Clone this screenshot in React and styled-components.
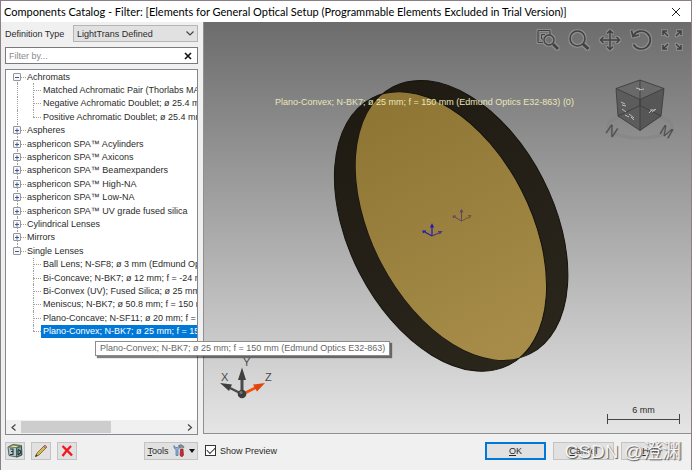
import React from 'react';
import styled, { createGlobalStyle, css } from 'styled-components';

const COLOR = {
  FACE: '#f0f0f0',
  TEXT: '#2b2b2b',
  BORDER: '#7a7a7a',
  BUTTON: '#e1e1e1',
  BUTTON_BORDER: '#c3c3c3',
  SELECTED: '#0078d7',
  LABEL: '#e9e6b9',
};

const FONT_SIZE = {
  NORMAL: '9px',
  TITLE: '11px',
  WATERMARK: '19px',
};

const GlobalStyle = createGlobalStyle`
  * {
    box-sizing: border-box;
  }

  body {
    margin: 0;
    background-color: #ffffff;
    color: ${COLOR.TEXT};
    font-family: 'Liberation Sans', Arial, sans-serif;
    font-size: ${FONT_SIZE.NORMAL};
  }

  button, input, select {
    font: inherit;
    color: inherit;
    margin: 0;
  }
`;

const Window = styled.main`
  position: relative;
  display: flex;
  flex-direction: column;
  height: calc(100vh - 1px);
  border: solid #8a7f84;
  border-width: 1px 1px 0;
  background-color: ${COLOR.FACE};
  overflow: hidden;
`;

const TitleBar = styled.header`
  display: flex;
  justify-content: space-between;
  align-items: center;
  height: 21px;
  padding: 0 10px 0 3px;
  background-color: #ffffff;
  color: #000000;

  h1 {
    margin: 0;
    font-family: Lato, 'Open Sans', sans-serif;
    font-size: ${FONT_SIZE.TITLE};
    font-weight: 400;
    white-space: nowrap;
  }
`;

const IconButton = styled.button`
  display: flex;
  justify-content: center;
  align-items: center;
  padding: 0;
  border: none;
  background: none;
`;

const Body = styled.div`
  flex: 1;
  min-height: 0;
  display: grid;
  grid-template-columns: 193px 1fr;
  column-gap: 5px;
  padding-left: 4px;
`;

const Sidebar = styled.section`
  min-width: 0;
  min-height: 0;
  display: flex;
  flex-direction: column;
  gap: 5px;
  padding-top: 3px;
`;

const Field = styled.div`
  display: flex;
  justify-content: space-between;
  align-items: center;
`;

const SelectBox = styled.div`
  position: relative;
  width: 125px;

  select {
    display: block;
    width: 100%;
    height: 17px;
    padding: 0 3px;
    appearance: none;
    border: 1px solid #b5b5b5;
    border-radius: 0;
    background-color: ${COLOR.BUTTON};
  }

  svg {
    position: absolute;
    top: 6px;
    right: 4px;
    pointer-events: none;
  }
`;

const FilterBox = styled.div`
  display: flex;
  align-items: center;
  height: 17px;
  padding: 0 5px 0 3px;
  border: 1px solid ${COLOR.BORDER};
  background-color: #ffffff;

  input {
    flex: 1;
    min-width: 0;
    padding: 0;
    border: none;
    outline: none;
  }

  input::placeholder {
    color: #8a8a8a;
  }
`;

const TreePane = styled.div`
  flex: 1;
  min-height: 0;
  display: flex;
  flex-direction: column;
  justify-content: space-between;
  border: 1px solid #828790;
  background-color: #ffffff;
`;

const TreeList = styled.ul`
  display: grid;
  grid-auto-rows: 1fr;
  min-height: 268px;
  margin: 0;
  padding: 0 0 0 7px;
  list-style: none;
  overflow: hidden;
`;

const connector = css`
  &::before {
    content: '';
    position: absolute;
    left: ${({ $level }) => ($level ? '20px' : '4px')};
    top: ${({ $first }) => ($first ? '50%' : '0')};
    bottom: ${({ $last }) => ($last ? '50%' : '0')};
    border-left: 1px dotted #a0a0a0;
  }

  &::after {
    content: '';
    position: absolute;
    left: ${({ $level }) => ($level ? '20px' : '8px')};
    top: 50%;
    width: ${({ $level }) => ($level ? '8px' : '5px')};
    border-top: 1px dotted #a0a0a0;
  }
`;

const TreeItem = styled.li`
  position: relative;
  display: flex;
  align-items: stretch;
  min-width: 0;
  padding-left: ${({ $level }) => ($level ? '28px' : '0')};
  ${connector}
`;

const Trunk = styled.i`
  position: absolute;
  left: 4px;
  top: 0;
  bottom: 0;
  border-left: 1px dotted #a0a0a0;
`;

const Expander = styled.button`
  position: relative;
  z-index: 1;
  align-self: center;
  flex: none;
  display: flex;
  width: 8px;
  height: 8px;
  margin-right: 4px;
  padding: 0;
  border: 1px solid #969696;
  border-radius: 1px;
  background-color: #f6f6f6;
`;

const ItemText = styled.span`
  display: flex;
  align-items: center;
  flex: ${({ $selected }) => ($selected ? '1' : 'none')};
  padding-left: 2px;
  line-height: 12px;
  white-space: nowrap;
  color: ${({ $selected }) => ($selected ? '#ffffff' : COLOR.TEXT)};
  background-color: ${({ $selected }) =>
    $selected ? COLOR.SELECTED : 'transparent'};
`;

const ScrollBar = styled.div`
  display: flex;
  align-items: center;
  height: 14px;
  background-color: ${COLOR.FACE};

  .track {
    flex: 1;
    height: 100%;
  }

  .thumb {
    width: 56%;
    height: 12px;
    margin-top: 1px;
    background-color: #cdcdcd;
  }

  button {
    width: 15px;
  }
`;

const ToolRow = styled.div`
  display: flex;
  align-items: center;
  gap: 6px;
  height: 35px;
  margin-top: -5px;
  padding-bottom: 4px;
`;

const PushButton = styled.button`
  display: flex;
  justify-content: center;
  align-items: center;
  gap: 4px;
  width: ${({ $width }) => $width};
  height: 18px;
  padding: 0;
  border: 1px solid ${COLOR.BUTTON_BORDER};
  background-color: ${COLOR.BUTTON};

  ${({ $primary }) =>
    $primary &&
    css`
      border: 2px solid ${COLOR.SELECTED};
    `}

  ${({ $pushed }) =>
    $pushed &&
    css`
      margin-left: auto;
    `}
`;

const Preview = styled.section`
  min-width: 0;
  min-height: 0;
  display: flex;
  flex-direction: column;
`;

const Viewport = styled.div`
  position: relative;
  flex: 1;
  min-height: 0;
  overflow: hidden;
  border: solid #8f8f8f;
  border-width: 0 0 1px 1px;
  background: linear-gradient(#6c6c6c, #e5e5e5);
`;

const Scene = styled.svg`
  position: absolute;
  inset: 0;
  width: 100%;
  height: 100%;
`;

const ViewTools = styled.div`
  position: absolute;
  top: 6px;
  right: 7px;
  display: flex;
  gap: 7px;
`;

const ObjectLabel = styled.div`
  position: absolute;
  top: 73px;
  left: 71px;
  line-height: 14px;
  white-space: nowrap;
  color: ${COLOR.LABEL};
`;

const ViewCube = styled.svg`
  position: absolute;
  top: 52px;
  right: 7px;
`;

const AxisTriad = styled.svg`
  position: absolute;
  left: 12px;
  bottom: 30px;
`;

const Scale = styled.div`
  position: absolute;
  right: 11px;
  bottom: 9px;
  width: 73px;
  text-align: center;
  line-height: 8px;

  svg {
    display: block;
    width: 100%;
  }
`;

const Footer = styled.footer`
  display: flex;
  align-items: center;
  gap: 7px;
  height: 36px;
  padding: 0 9px 3px 2px;
`;

const CheckLabel = styled.label`
  display: flex;
  align-items: center;
  gap: 4px;
  margin-right: auto;

  input {
    display: grid;
    place-items: center;
    width: 11px;
    height: 11px;
    appearance: none;
    border: 1px solid #333333;
    background-color: #ffffff;
  }

  input:checked::before {
    content: '';
    width: 7px;
    height: 4px;
    margin-bottom: 2px;
    border: solid #333333;
    border-width: 0 0 1px 1px;
    transform: rotate(-45deg);
  }
`;

const Tooltip = styled.div`
  position: absolute;
  top: 340px;
  left: 94px;
  padding: 0 4px;
  border: 1px solid #8c8c8c;
  background-color: #ffffff;
  box-shadow: 2px 2px 1px #00000080;
  color: #666666;
  line-height: 13px;
  white-space: nowrap;
`;

const Watermark = styled.div`
  position: absolute;
  right: 10px;
  bottom: 5px;
  font-family: 'Liberation Sans', 'Noto Sans CJK SC', sans-serif;
  font-size: ${FONT_SIZE.WATERMARK};
  line-height: 26px;
  color: #f4f4f4;
  text-shadow: 1px 1px 1px #555555;
  pointer-events: none;
`;

const TREE = [
  { text: 'Achromats', open: true, first: true },
  { text: 'Matched Achromatic Pair (Thorlabs MAP10)', level: 1 },
  { text: 'Negative Achromatic Doublet; ø 25.4 mm', level: 1 },
  { text: 'Positive Achromatic Doublet; ø 25.4 mm', level: 1, last: true },
  { text: 'Aspheres' },
  { text: 'asphericon SPA™ Acylinders' },
  { text: 'asphericon SPA™ Axicons' },
  { text: 'asphericon SPA™ Beamexpanders' },
  { text: 'asphericon SPA™ High-NA' },
  { text: 'asphericon SPA™ Low-NA' },
  { text: 'asphericon SPA™ UV grade fused silica' },
  { text: 'Cylindrical Lenses' },
  { text: 'Mirrors' },
  { text: 'Single Lenses', open: true, last: true },
  { text: 'Ball Lens; N-SF8; ø 3 mm (Edmund Optics)', level: 1, end: true },
  { text: 'Bi-Concave; N-BK7; ø 12 mm; f = -24 mm', level: 1, end: true },
  { text: 'Bi-Convex (UV); Fused Silica; ø 25 mm; f', level: 1, end: true },
  { text: 'Meniscus; N-BK7; ø 50.8 mm; f = 150 mm', level: 1, end: true },
  { text: 'Plano-Concave; N-SF11; ø 20 mm; f = -40', level: 1, end: true },
  {
    text: 'Plano-Convex; N-BK7; ø 25 mm; f = 150 mm',
    level: 1,
    end: true,
    last: true,
    selected: true,
  },
];

const LENS_NAME = 'Plano-Convex; N-BK7; ø 25 mm; f = 150 mm (Edmund Optics E32-863)';

const Chevron = ({ d, width = 8, height = 5 }) => (
  <svg width={width} height={height} fill='none' stroke='#444' strokeWidth='1.2'>
    <path d={d} />
  </svg>
);

const TreeRow = ({ item }) => (
  <TreeItem $level={item.level} $first={item.first} $last={item.last}>
    {item.level && !item.end && <Trunk />}
    {!item.level && (
      <Expander aria-label={item.open ? 'Collapse' : 'Expand'}>
        <svg width='6' height='6' stroke='#3f56a0' strokeWidth='1'>
          <path d={item.open ? 'M1 3.5H5' : 'M1 3.5H5M3 1.5V5.5'} />
        </svg>
      </Expander>
    )}
    <ItemText $selected={item.selected}>{item.text}</ItemText>
  </TreeItem>
);

const LibraryIcon = () => (
  <svg width='16' height='15' strokeWidth='0.8'>
    <path d='M1 4 6 1.500 14.500 2.500 15 12 10 14 2 12.500Z' fill='#b4cbc6' stroke='#37453f' />
    <path d='M2 4 6 2 13 3 9 4.500Z' fill='#ecf0a8' stroke='#59643a' />
    <path d='M9.500 5 14.500 3.500V12L9.500 14Z' fill='#7fa896' stroke='#2f4a40' />
    <path d='M3 6H6V8.500H4M6 8.500V11.500H3M11 6.500V12M11 6.500 13.500 8V10L11 12' fill='none' stroke='#22334d' strokeWidth='1.100' />
  </svg>
);

const PencilIcon = () => (
  <svg width='14' height='14'>
    <path d='M1.500 12.500 3 9 10.500 1.500 12.500 3.500 5 11Z' fill='#dcb94f' stroke='#6f5c2c' strokeWidth='0.8' />
    <path d='M9.500 2.500 11 1 13 3 11.500 4.500Z' fill='#c98a86' stroke='#7b5350' strokeWidth='0.600' />
    <path d='M1 13 2.200 10.200 3.800 11.800Z' fill='#333' />
  </svg>
);

const DeleteIcon = () => (
  <svg width='12' height='12' stroke='#f4161c' strokeWidth='2.300' fill='none'>
    <path d='M1.500 1C4 3.500 8 7 11 10.500M10 1C7 4 4 7.500 1.500 11' />
  </svg>
);

const ToolsIcon = () => (
  <svg width='12' height='13'>
    <path d='M1 1.500V4L3 5.500V11.500H5V5.500L6.500 4V1.500L4.800 3.500H2.500Z' fill='#8fb3e0' stroke='#4b6fa5' strokeWidth='0.700' />
    <path d='M5.500 1.500 8 .5 11 2.500 10.500 4 8.500 3.200 7.500 4Z' fill='#8c8f96' stroke='#555' strokeWidth='0.500' />
    <path d='M7.500 5H10L10.500 11Q10 13 8 12.500L7 11Z' fill='#c42a30' stroke='#821c20' strokeWidth='0.600' />
  </svg>
);

const viewIcons = [
  {
    name: 'Zoom to region',
    paths: (
      <>
        <path d='M1 1.500H13V6M1 1.500V13.500H6M6 10H4.500V5.500H8' strokeWidth='1' />
        <circle cx='12' cy='11' r='5' strokeWidth='1.300' />
        <path d='M16 15 21 20' strokeWidth='2.600' />
      </>
    ),
  },
  {
    name: 'Zoom',
    paths: (
      <>
        <circle cx='9.500' cy='9.500' r='7.500' strokeWidth='1.500' />
        <path d='M15 15 20.500 20' strokeWidth='3' />
      </>
    ),
  },
  {
    name: 'Pan',
    paths: (
      <path
        d='M11 1.500V20.500M1.500 11H20.500M8 4.500 11 1.500 14 4.500M8 17.500 11 20.500 14 17.500M4.500 8 1.500 11 4.500 14M17.500 8 20.500 11 17.500 14'
        strokeWidth='1.400'
      />
    ),
  },
  {
    name: 'Rotate',
    paths: (
      <>
        <path d='M3.500 6.500A9 9 0 1 1 3.500 15.500' strokeWidth='1.700' />
        <path d='M1.500 1.500 3 7.500 9 6' strokeWidth='1.700' />
      </>
    ),
  },
  {
    name: 'Fit view',
    paths: (
      <path
        d='M7 7 2.500 2.500M2 6V2H6M15 7 19.500 2.500M16 2H20V6M7 15 2.500 19.500M2 16V20H6M15 15 19.500 19.500M20 16V20H16'
        strokeWidth='1.600'
      />
    ),
  },
];

const ViewIcon = ({ paths }) => (
  <svg width='24' height='24' viewBox='-1 -1 24 24' fill='none'>
    <g stroke='#b8b8b8' strokeOpacity='0.4' filter='url(#halo)'>
      {paths}
    </g>
    <g stroke='#414141'>{paths}</g>
  </svg>
);

const LensScene = () => (
  <Scene viewBox='204 22 487 411' preserveAspectRatio='xMidYMid meet'>
    <defs>
      <filter id='halo' x='-20%' y='-20%' width='140%' height='140%'>
        <feMorphology operator='dilate' radius='0.6' />
        <feGaussianBlur stdDeviation='0.5' />
      </filter>
      <clipPath id='back'>
        <ellipse rx='150' ry='91' transform='translate(461.8 220.2) rotate(62.8)' />
      </clipPath>
      <linearGradient id='gold' gradientUnits='userSpaceOnUse' x1='-130' x2='130' y1='0' y2='0'>
        <stop offset='0' stopColor='#907635' />
        <stop offset='1' stopColor='#a68c48' />
      </linearGradient>
      <linearGradient id='rim' x1='0' x2='1'>
        <stop offset='0' stopColor='#1f1b13' />
        <stop offset='1' stopColor='#2b261c' />
      </linearGradient>
    </defs>
    <g fill='url(#rim)' stroke='#14120d' strokeWidth='1'>
      <ellipse rx='150' ry='91' transform='translate(440.5 231.5) rotate(62.8)' />
      <ellipse rx='150' ry='91' transform='translate(461.8 220.2) rotate(62.8)' />
    </g>
    <g clipPath='url(#back)'>
      <ellipse
        rx='150'
        ry='91'
        transform='translate(440.5 231.5) rotate(62.8)'
        fill='url(#gold)'
        stroke='#14120d'
        strokeWidth='1'
      />
    </g>
    <g fill='none' stroke='#2418b4' strokeWidth='1.200'>
      <path d='M432 236V225M430.500 227.500 432 224.500 433.500 227.500M432 236 423 231M423.500 233 423 231 426 231' />
      <path d='M432 236 441 232M438 231.500 441.500 231.500 439.500 234' stroke='#4a3a78' />
    </g>
    <g fill='none' stroke='#5f4560' strokeWidth='1'>
      <path d='M461.500 221V210M460 212.500 461.500 209.500 463 212.500M461.500 221 453 216M453.500 218 453 216 456 216' />
      <path d='M461.500 221 471 216M468 215.500 471 215.500 469 218.500' stroke='#75503f' />
    </g>
  </Scene>
);

const Cube = () => (
  <ViewCube width='84' height='72' viewBox='600 74 84 72'>
    <ellipse cx='640' cy='126' rx='32' ry='12' fill='none' stroke='#808080' strokeWidth='3' opacity='0.4' />
    <path d='M616 88.500 640 80 664 88.500 661 116 640 130.500 618 116Z' fill='#5c5c5c' />
    <path d='M616 88.500 640 80 664 88.500 640 99.500Z' fill='#696969' />
    <path d='M640 99.500 664 88.500 661 116 640 130.500Z' fill='#565656' />
    <path
      d='M616 88.500 640 80 664 88.500 661 116 640 130.500 618 116ZM616 88.500 640 99.500 664 88.500M640 99.500V130.500M618 116 640 105.500 661 116M640 80V105.500'
      fill='none'
      stroke='#3a3a3a'
      strokeWidth='0.8'
    />
    <g fill='none' stroke='#bdbdbd' strokeWidth='1'>
      <path d='M636 88 640 89 639 90 644 89' />
      <path d='M621 102 625 104M622 105 626 106M622 109 626 112M625 115 629 117M629 114 634 118M631 117 634 120' />
      <path d='M649 113 652 110M652 112 656 109M650 110 655 110' />
    </g>
    <g fill='#4d4d4d' fontSize='15' fontFamily='Liberation Sans, sans-serif' textAnchor='middle'>
      <text transform='translate(609 135) rotate(34)'>N</text>
      <text transform='translate(664 136) rotate(30)'>M</text>
    </g>
  </ViewCube>
);

const Triad = () => (
  <AxisTriad width='60' height='46' viewBox='216 357 60 46'>
    <g stroke='#4a4a4a' strokeWidth='2.400' fill='#3f3f3f'>
      <path d='M242 394V377' strokeWidth='3' />
      <path d='M242 394 230 388' />
      <path d='M242 367.500 246 380H238ZM220 383 232 384.500 229 391Z' stroke='none' />
    </g>
    <path d='M243 394 256 387.500' stroke='#f2500f' strokeWidth='2.800' />
    <path d='M265 383 253 384.500 257 391.500Z' fill='#e2440b' />
    <circle cx='242' cy='394' r='4.300' fill='#3d3d3d' />
    <circle cx='241' cy='392.500' r='1.500' fill='#777' />
    <g fill='#4a4a4a' fontSize='11' fontFamily='Liberation Sans, sans-serif'>
      <text x='221' y='381'>X</text>
      <text x='243' y='366'>Y</text>
      <text x='265' y='381'>Z</text>
    </g>
  </AxisTriad>
);

const App = () => (
  <>
    <GlobalStyle />
    <Window>
      <TitleBar>
        <h1>
          Components Catalog - Filter: [Elements for General Optical Setup
          (Programmable Elements Excluded in Trial Version)]
        </h1>
        <IconButton aria-label='Close'>
          <svg width='10' height='10' stroke='#222' strokeWidth='1'>
            <path d='M1 1 9 9M9 1 1 9' />
          </svg>
        </IconButton>
      </TitleBar>
      <Body>
        <Sidebar>
          <Field>
            <label htmlFor='definition'>Definition Type</label>
            <SelectBox>
              <select id='definition'>
                <option>LightTrans Defined</option>
              </select>
              <Chevron d='M0.500 0.500 4 4 7.500 0.500' />
            </SelectBox>
          </Field>
          <FilterBox>
            <input aria-label='Filter' placeholder='Filter by...' />
            <IconButton aria-label='Clear filter'>
              <svg width='8' height='8' stroke='#111' strokeWidth='1.600'>
                <path d='M1 1 7 7M7 1 1 7' />
              </svg>
            </IconButton>
          </FilterBox>
          <TreePane>
            <TreeList>
              {TREE.map((item) => (
                <TreeRow key={item.text} item={item} />
              ))}
            </TreeList>
            <ScrollBar>
              <IconButton aria-label='Scroll left'>
                <Chevron d='M4.500 0.500 1 3.500 4.500 6.500' width={6} height={7} />
              </IconButton>
              <div className='track'>
                <div className='thumb' />
              </div>
              <IconButton aria-label='Scroll right'>
                <Chevron d='M1 0.500 4.500 3.500 1 6.500' width={6} height={7} />
              </IconButton>
            </ScrollBar>
          </TreePane>
          <ToolRow>
            <PushButton $width='20px' aria-label='Library'>
              <LibraryIcon />
            </PushButton>
            <PushButton $width='20px' aria-label='Edit'>
              <PencilIcon />
            </PushButton>
            <PushButton $width='20px' aria-label='Delete'>
              <DeleteIcon />
            </PushButton>
            <PushButton $width='54px' $pushed>
              <span>
                <u>T</u>ools
              </span>
              <ToolsIcon />
              <svg width='6' height='4'>
                <path d='M0 0H6L3 4Z' fill='#111' />
              </svg>
            </PushButton>
          </ToolRow>
        </Sidebar>
        <Preview>
          <Viewport>
            <LensScene />
            <ObjectLabel>{LENS_NAME} (0)</ObjectLabel>
            <ViewTools>
              {viewIcons.map(({ name, paths }) => (
                <IconButton key={name} aria-label={name}>
                  <ViewIcon paths={paths} />
                </IconButton>
              ))}
            </ViewTools>
            <Cube />
            <Triad />
            <Scale>
              6 mm
              <svg height='10' viewBox='0 0 73 10' fill='none' stroke='#444'>
                <path d='M0.500 0V10M72.500 0V10M0 5.500H73' />
              </svg>
            </Scale>
          </Viewport>
          <Footer>
            <CheckLabel>
              <input type='checkbox' defaultChecked />
              Show Preview
            </CheckLabel>
            <PushButton $width='61px' $primary>
              <span>
                <u>O</u>K
              </span>
            </PushButton>
            <PushButton $width='61px'>
              <span>
                <u>C</u>ancel
              </span>
            </PushButton>
            <PushButton $width='61px'>
              <span>
                <u>H</u>elp
              </span>
            </PushButton>
          </Footer>
        </Preview>
      </Body>
      <Tooltip role='tooltip'>{LENS_NAME}</Tooltip>
      <Watermark>CSDN @澄渊</Watermark>
    </Window>
  </>
);

export default App;
